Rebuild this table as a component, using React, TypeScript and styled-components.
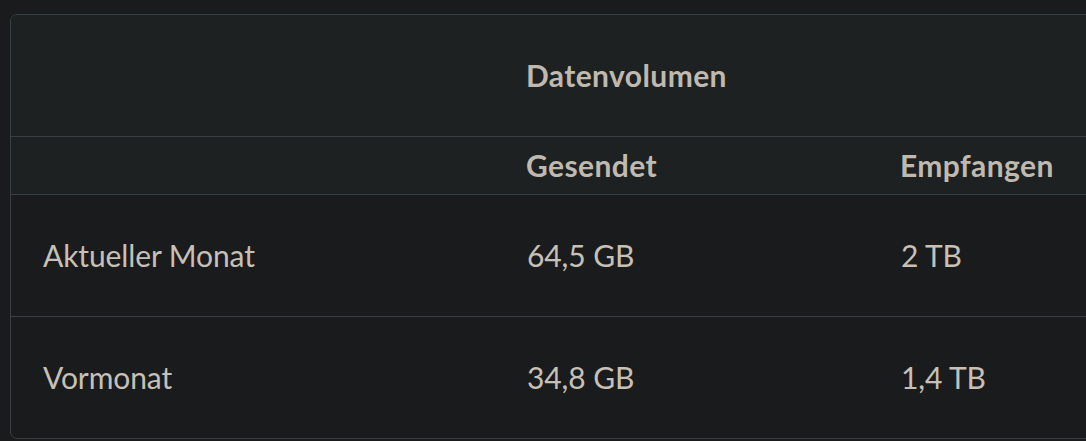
import React from "react";
import styled, { createGlobalStyle } from "styled-components";

const Global = createGlobalStyle`
  html, body { margin: 0; padding: 0; background: #1a1b1d; overflow: hidden; }
  body { font-family: Lato, "Liberation Sans", sans-serif; }
`;

const Page = styled.div`
  padding: 14px 0 0 10px;
  width: 1300px;
`;

const Card = styled.div`
  width: 1200px;
  border: 1px solid #3a3f41;
  border-radius: 7px;
  overflow: hidden;
  background: #1a1b1d;
`;

const Table = styled.table`
  width: 100%;
  border-collapse: collapse;
  table-layout: fixed;
  font-size: 30px;
  color: #c6c0b6;
`;

const Head = styled.thead`
  background: #1e2122;
`;

const Row = styled.tr<{ $h: number; $last?: boolean }>`
  height: ${(p) => p.$h}px;
  border-bottom: ${(p) => (p.$last ? "none" : "1px solid #3a3f41")};
`;

const Th = styled.th`
  text-align: left;
  font-weight: 700;
  letter-spacing: 0.4px;
  padding: 0 0 0 31px;
  color: #bfb9af;
  vertical-align: middle;
`;

const Td = styled.td`
  padding: 0 0 0 32px;
  vertical-align: middle;
  letter-spacing: -0.1px;
`;

const rows = [
  { label: "Aktueller Monat", sent: "64,5 GB", recv: "2 TB" },
  { label: "Vormonat", sent: "34,8 GB", recv: "1,4 TB" },
];

export default function App() {
  return (
    <Page>
      <Global />
      <Card>
        <Table>
          <colgroup>
            <col style={{ width: 484 }} />
            <col style={{ width: 374 }} />
            <col />
          </colgroup>
          <Head>
            <Row $h={121}>
              <Th />
              <Th colSpan={2}>Datenvolumen</Th>
            </Row>
            <Row $h={58}>
              <Th />
              <Th>Gesendet</Th>
              <Th>Empfangen</Th>
            </Row>
          </Head>
          <tbody>
            {rows.map((r, i) => (
              <Row key={r.label} $h={122} $last={i === rows.length - 1}>
                <Td>{r.label}</Td>
                <Td>{r.sent}</Td>
                <Td>{r.recv}</Td>
              </Row>
            ))}
          </tbody>
        </Table>
      </Card>
    </Page>
  );
}
